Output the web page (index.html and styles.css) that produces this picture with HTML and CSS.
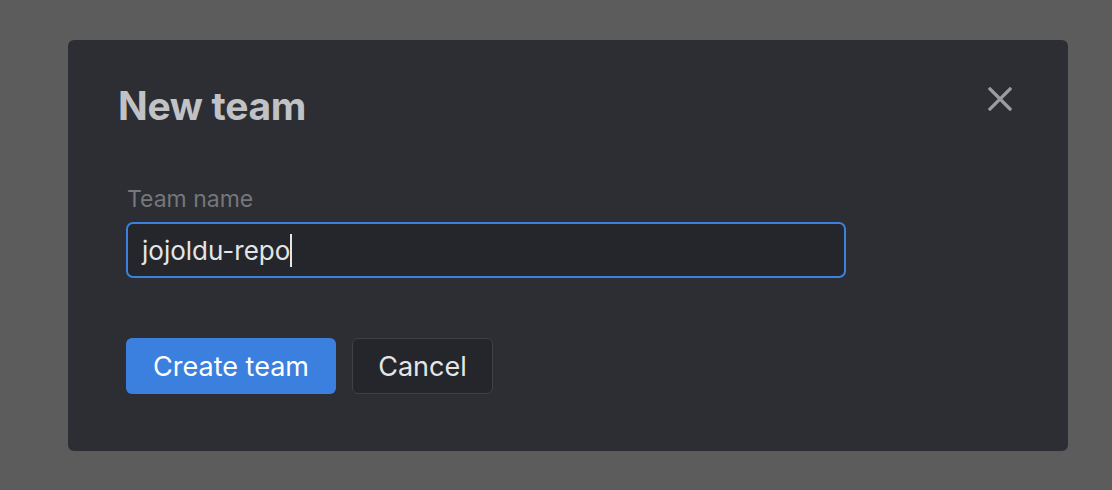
FILE: index.html
```html
<!DOCTYPE html>
<html>
<head>
<meta charset="utf-8">
<link rel="stylesheet" href="styles.css">
</head>
<body>
<div class="overlay">
  <div class="modal">
    <div class="header">
      <h1 class="title">New team</h1>
      <button class="close" aria-label="Close">
        <svg width="24" height="24" viewBox="0 0 24 24"><path d="M2 2 L22 22 M22 2 L2 22" stroke="#9b9c9e" stroke-width="3.2" stroke-linecap="square"/></svg>
      </button>
    </div>
    <div class="field">
      <label class="label">Team name</label>
      <div class="input"><span class="value">jojoldu-repo</span><span class="caret"></span></div>
    </div>
    <div class="actions">
      <button class="btn primary">Create team</button>
      <button class="btn secondary">Cancel</button>
    </div>
  </div>
</div>
</body>
</html>
```

FILE: styles.css
```css
html, body {
  margin: 0;
  padding: 0;
  background: #5c5c5c;
  font-family: Inter, "Noto Sans", sans-serif;
}
.overlay {
  width: 1112px;
  height: 490px;
  padding: 40px 0 0 68px;
  box-sizing: border-box;
}
.modal {
  width: 1000px;
  height: 411px;
  box-sizing: border-box;
  background: #2c2e33;
  border-radius: 6px;
  padding: 0 56px 0 50px;
}
.header {
  display: flex;
  justify-content: space-between;
  align-items: flex-start;
  padding-top: 44px;
}
.title {
  margin: 0;
  font-size: 39px;
  font-weight: 700;
  line-height: 44px;
  color: #c1c2c5;
  letter-spacing: -0.3px;
}
.close {
  background: none;
  border: none;
  padding: 0;
  margin-top: 3px;
  width: 24px;
  height: 24px;
  display: flex;
}
.field {
  margin-top: 59px;
  margin-left: 8px;
}
.label {
  display: block;
  font-size: 23px;
  line-height: 24px;
  color: #75777b;
  margin-left: 1px;
}
.input {
  margin-top: 11px;
  width: 720px;
  height: 56px;
  box-sizing: border-box;
  border: 2px solid #3a82de;
  border-radius: 7px;
  background: #25262b;
  display: flex;
  align-items: center;
  padding-left: 14px;
}
.value {
  font-size: 26px;
  color: #e4e5e7;
}
.caret {
  width: 2px;
  height: 33px;
  background: #e4e5e7;
  margin-left: 0;
}
.actions {
  display: flex;
  gap: 16px;
  margin-top: 60px;
  margin-left: 8px;
}
.btn {
  height: 56px;
  font-family: Inter, "Noto Sans", sans-serif;
  font-size: 27px;
  border-radius: 6px;
  box-sizing: border-box;
  padding: 0;
}
.primary {
  width: 210px;
  background: #3b80df;
  color: #ffffff;
  border: none;
}
.secondary {
  width: 141px;
  background: #25262b;
  color: #e4e5e7;
  border: 1.5px solid #3f4146;
}
```
